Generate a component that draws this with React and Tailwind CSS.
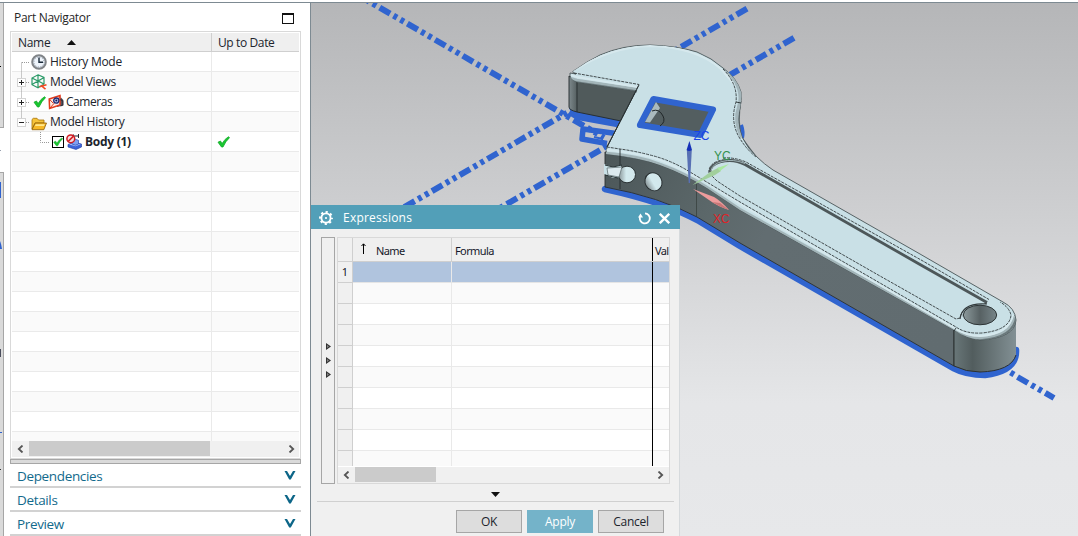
import React from 'react';

const HANDLE_TOP = 'M576 74 Q570 72 575 70 Q586 62 600 55 Q623 45 650 45 Q678 46 697 52 Q712 58 723 68 Q737 78 741 92 Q742 98 740 108 Q736 121 742 137 Q748 149 757 157 Q764 164 773 170 L920 254 L1003 302 Q1015 308 1016 320 Q1015 338 980 340 Q966 338 954 330 L740 210 L707 188 Q685 174 660 165 Q640 158 606 154 L607 147 L636 91 L577 82 Q569 79 570 73 Z';

function Check({ className }) {
  return (
    <svg viewBox="0 0 13 12" className={className}>
      <path d="M1 6.2 L3.5 5 L5 7.6 Q8 2.6 11.6 0.7 L12.5 1.7 Q8.7 5 6 11 L4.5 11 Z" fill="#18c72f" stroke="#12a828" strokeWidth="0.8" />
    </svg>
  );
}

function ClockIcon() {
  return (
    <svg viewBox="0 0 16 16" className="h-4 w-4 shrink-0">
      <circle cx="8" cy="8" r="6.8" fill="#dfe6ee" stroke="#808488" strokeWidth="2" />
      <circle cx="8" cy="8" r="5" fill="#eef4fb" stroke="#8f9aa8" strokeWidth="1" strokeDasharray="1 1.6" />
      <path d="M8 3.5 V8.3 H12" fill="none" stroke="#182838" strokeWidth="1.4" />
    </svg>
  );
}

function ViewsIcon() {
  return (
    <svg viewBox="0 0 16 16" className="h-4 w-4 shrink-0" fill="none">
      <path d="M7 0.8 L13 3.5 V10 L7 13.7 L1 10.7 V4 Z M1 4 L7 7 L13 3.5 M7 1 V13.5 M1 10.5 L7 7 L13 10" stroke="#2b9a68" strokeWidth="1.2" />
      <path d="M8.5 12.8 L15.5 10.8 M10 11.5 L14.5 15.2" stroke="#f04a23" strokeWidth="1.6" />
    </svg>
  );
}

function CameraIcon() {
  return (
    <svg viewBox="0 0 16 16" className="h-4 w-4 shrink-0" fill="none">
      <path d="M9 4.5 L13 3.5 L15.3 6 V11.5 L9 13 Z" fill="#55525c" />
      <path d="M1.2 5 L12 1.5 V11 L1.6 14.5 Z" fill="#fdebe3" stroke="#e33a1c" strokeWidth="1.5" />
      <path d="M1.6 14.5 L12 2.5 M1.2 5 L5 9" stroke="#e33a1c" strokeWidth="1" />
      <circle cx="8.3" cy="6.6" r="2.6" fill="#b7c6ef" stroke="#222a70" strokeWidth="1.3" />
      <circle cx="8.3" cy="6.6" r="1" fill="#101850" />
      <path d="M12.5 5.5 L14.8 7 V11 L12.5 12" stroke="#30303a" strokeWidth="1.1" />
    </svg>
  );
}

function FolderIcon() {
  return (
    <svg viewBox="0 0 16 14" className="mt-[3px] h-[14px] w-4 shrink-0">
      <path d="M1 12 V2.5 L2.3 1.3 H6 L7.5 3 H13 V6 H4 Z" fill="#f6c33a" stroke="#a87408" strokeWidth="0.8" />
      <path d="M1 12.7 L4.2 6 H15.5 L12.8 12.7 Z" fill="#f7b928" stroke="#8a5c05" strokeWidth="0.8" />
      <path d="M4.8 7.2 H13.8 L13 9 H4 Z" fill="#ffe98f" />
    </svg>
  );
}

function BodyIcon() {
  return (
    <svg viewBox="0 0 16 16" className="h-4 w-4 shrink-0" fill="none">
      <path d="M2 10.5 L8 8 L15.5 10 V13 L10 15.5 L2 13 Z" fill="#3d63d8" stroke="#1c3ba3" strokeWidth="0.6" />
      <path d="M3 10.5 L8.5 8.5 L14.5 10.2 L9.6 12.2 Z" fill="#a9bff7" />
      <path d="M6 6.3 L9 5.2 L12.5 6.3 V10 L9.5 11.2 L6 10 Z" fill="#80a0f0" stroke="#2849b8" strokeWidth="0.7" />
      <path d="M7 2 H12.5 M7.5 0.5 V3.5 M12.5 0 V4" stroke="#1f2430" strokeWidth="1" />
      <circle cx="4.8" cy="4.8" r="3.9" fill="#f6dcdc" stroke="#d01b22" strokeWidth="1.5" />
      <path d="M2.1 7.5 L7.5 2.1" stroke="#d01b22" strokeWidth="1.5" />
    </svg>
  );
}

function Toggle({ open }) {
  return (
    <svg viewBox="0 0 9 9" className="h-[9px] w-[9px] shrink-0">
      <rect x="0.5" y="0.5" width="8" height="8" fill="#fff" stroke="#d4d4d4" />
      <path d={open ? 'M2 4.5 H7' : 'M2 4.5 H7 M4.5 2 V7'} stroke="#222" strokeWidth="1" />
    </svg>
  );
}

function Tree() {
  return (
    <div className="flex flex-col text-[12px] leading-5 tracking-[-0.28px] text-[#20242c]">
      <div className="flex h-5 items-center pl-[19px]">
        <ClockIcon /><span className="pl-[3px]">History Mode</span>
      </div>
      <div className="flex h-5 items-center pl-[5px]">
        <Toggle /><span className="w-[5px]" /><ViewsIcon /><span className="pl-[3px] tracking-[-0.4px]">Model Views</span>
      </div>
      <div className="flex h-5 items-center pl-[5px]">
        <Toggle /><span className="w-[7px]" /><Check className="h-3 w-[13px]" /><span className="w-[2px]" /><CameraIcon /><span className="pl-[2px] tracking-[-0.45px]">Cameras</span>
      </div>
      <div className="flex h-5 items-center pl-[5px]">
        <Toggle open /><span className="w-[5px]" /><FolderIcon /><span className="pl-[3px]">Model History</span>
      </div>
      <div className="flex h-5 items-center pl-[40px]">
        <span className="flex h-3 w-3 items-center justify-center border border-black bg-white"><Check className="h-[10px] w-[10px]" /></span>
        <span className="w-[2px]" /><BodyIcon /><span className="pl-[3px] font-bold">Body (1)</span>
      </div>
    </div>
  );
}

function Chevron({ dir }) {
  return (
    <svg viewBox="0 0 7 8" className="h-2 w-[7px] shrink-0" fill="none">
      <path d={dir === 'left' ? 'M5.5 0.5 L1.8 4 L5.5 7.5' : 'M1.5 0.5 L5.2 4 L1.5 7.5'} stroke="#555" strokeWidth="1.8" />
    </svg>
  );
}

function Section({ title }) {
  return (
    <div className="flex h-6 shrink-0 items-center justify-between border-b-2 border-[#d2d2d2] pt-[2px] pr-[5px] pl-[7px]">
      <span className="text-[13.5px] leading-5 tracking-[-0.35px] text-[#126a8c]">{title}</span>
      <svg viewBox="0 0 12 9" className="mb-[2px] h-[9px] w-3"><path d="M0.5 0 H3 L6 5 L9 0 H11.5 L6.8 8.5 H5.2 Z" fill="#0d6688" /></svg>
    </div>
  );
}

function Navigator() {
  return (
    <div className="flex w-[307px] shrink-0 flex-col border-r border-[#7d8a92] bg-white pl-[6px]">
      <div className="flex h-7 shrink-0 items-center justify-between pr-4 pl-1">
        <span className="pt-[2px] text-[12px] tracking-[-0.3px] text-[#262626]">Part Navigator</span>
        <span className="mt-[2px] h-[11px] w-3 border border-t-2 border-[#111]" />
      </div>
      <div className="flex h-[428px] w-[291px] shrink-0 flex-col border border-[#d9d9d9] p-px">
        <div className="flex h-[19px] shrink-0 border-b border-[#cfcfcf] bg-[#efefef] text-[12px] leading-[19px] tracking-[-0.3px] text-[#20242c]">
          <div className="flex w-[200px] items-center border-r border-[#cfcfcf] pl-[6px]">
            Name
            <svg viewBox="0 0 9 5" className="ml-[17px] h-[5px] w-[9px]"><path d="M4.5 0 L9 5 H0 Z" fill="#111" /></svg>
          </div>
          <span className="pl-[6px] tracking-[-0.38px]">Up to Date</span>
        </div>
        <div className="grid min-h-0 flex-1 grid-cols-1 grid-rows-1 overflow-hidden">
          <div className="col-start-1 row-start-1 min-h-0">
            {Array.from({ length: 20 }, (_, i) => (
              <div key={i} className="flex h-5 border-b border-[#eaeaea] odd:bg-white even:bg-[#fafafa]">
                <span className="w-[200px] shrink-0 border-r border-[#eaeaea]" />
                {i === 4 && <Check className="mt-1 ml-[5px] h-3 w-[13px]" />}
              </div>
            ))}
          </div>
          <svg viewBox="0 0 199 388" className="col-start-1 row-start-1 h-[388px] w-[199px]" fill="none">
            <path d="M9.5 10.5 V70 M10 10.5 H18 M14 30.5 H18 M14 50.5 H18 M14 70.5 H18 M28.5 80 V90.5 H38" stroke="#999" strokeDasharray="1 1" />
          </svg>
          <div className="col-start-1 row-start-1"><Tree /></div>
        </div>
        <div className="flex h-4 shrink-0 items-center justify-between bg-[#f0f0f0] pr-1 pb-px pl-[5px]">
          <Chevron dir="left" />
          <span className="mr-auto ml-[5px] h-[15px] w-[181px] bg-[#cbcbcb]" />
          <Chevron dir="right" />
        </div>
      </div>
      <div className="mb-px h-[5px] w-[291px] shrink-0 border border-[#a6a6a6] bg-[#dadada]" />
      <div className="-mt-px flex w-[291px] flex-col">
        <Section title="Dependencies" />
        <Section title="Details" />
        <Section title="Preview" />
      </div>
    </div>
  );
}

function Wrench() {
  return (
    <svg viewBox="311 3 767 533" className="h-full w-full" fill="none">
      <defs>
        <linearGradient id="wall" x1="605" y1="160" x2="954" y2="340" gradientUnits="userSpaceOnUse">
          <stop offset="0" stopColor="#4c5759" /><stop offset="0.3" stopColor="#5c686a" /><stop offset="0.45" stopColor="#626d71" /><stop offset="1" stopColor="#616c70" />
        </linearGradient>
        <linearGradient id="end" x1="954" y1="0" x2="1016" y2="0" gradientUnits="userSpaceOnUse">
          <stop offset="0" stopColor="#697779" /><stop offset="0.3" stopColor="#525d5e" /><stop offset="1" stopColor="#829094" />
        </linearGradient>
        <linearGradient id="jaw" x1="569" y1="0" x2="578" y2="0" gradientUnits="userSpaceOnUse">
          <stop offset="0" stopColor="#7d898c" /><stop offset="1" stopColor="#505a5b" />
        </linearGradient>
        <linearGradient id="bore" x1="963" y1="0" x2="997" y2="0" gradientUnits="userSpaceOnUse">
          <stop offset="0" stopColor="#8d9b9d" /><stop offset="0.5" stopColor="#576163" /><stop offset="1" stopColor="#78868a" />
        </linearGradient>
        <linearGradient id="drill" x1="0" y1="0" x2="1" y2="0">
          <stop offset="0" stopColor="#879396" /><stop offset="0.45" stopColor="#d3eaee" /><stop offset="1" stopColor="#d3e7eb" />
        </linearGradient>
        <clipPath id="topClip"><path d={HANDLE_TOP} /></clipPath>
      </defs>

      <g stroke="#3064cf" strokeWidth="6" strokeDasharray="12 4 4 4 4 4">
        <path d="M352 -8.4 L604 137.6" />
        <path d="M747 8.7 L395 212.5" />
        <path d="M794 37.8 L490 213.8" />
        <path d="M1017.5 377 L1054 398" />
      </g>
      <path d="M1010.5 372.5 L1014 374.5" stroke="#3064cf" strokeWidth="6" />

      <path d="M570 111 L578 116 L622 124" stroke="#3064cf" strokeWidth="8" strokeLinejoin="round" />
      <path d="M616 133.5 L583 129 L582 139 L607 143.5" stroke="#3064cf" strokeWidth="5.5" strokeLinejoin="round" />
      <path d="M594 137 L603 139" stroke="#3064cf" strokeWidth="2" />
      <path d="M741 125 Q743.5 132 742 138" stroke="#3064cf" strokeWidth="4" />
      <path d="M605 189 Q665 202 699 221 L740 246 L954 368.5 Q966 375 985 375 Q1017 371 1016 350" stroke="#3064cf" strokeWidth="6.5" strokeLinecap="round" strokeLinejoin="round" />

      <path d="M569 76 L577 81 L637 90 L621 121 L577 112 Q569 110 569 107 Z" fill="url(#jaw)" stroke="#22292b" strokeWidth="0.9" />
      <path d="M577 82 V112" stroke="#22292b" strokeWidth="0.9" />
      <path d="M605 152 Q640 156 660 163 Q685 173 707 187 L740 208 L954 328 V366 L740 243 L697 217 Q660 197 605 187 Z" fill="url(#wall)" stroke="#2b3030" strokeWidth="0.9" />
      <path d="M954 328 Q966 339 981 339 Q1012 337 1016 318 V355 Q1011 371 980 372 Q966 372 954 366 Z" fill="url(#end)" />
      <path d="M954 328 V366 Q966 372 980 372 Q1011 371 1016 355" stroke="#2b3030" strokeWidth="1" />
      <path d="M735 100 Q729 117 739 137 Q748 151 757 157 L742 137 Q738 120 741.5 101 Z" fill="#5c686b" />

      <path d={HANDLE_TOP} fill="#c9e0e6" stroke="#4a5557" strokeWidth="0.9" />
      <g clipPath="url(#topClip)">
        <path d="M570 79 L577 82 L637 91 M606 155 Q640 158 660 166 Q685 175 707 189 L740 211 L954 331 Q966 340 980 340 Q1014 338 1016 315" stroke="#6b797c" strokeWidth="3" />
        <path d="M570 78 L577 80 L637 89 M606 153 Q640 156 660 164 Q685 173 707 187 L740 209 L954 329 Q966 338 980 338 Q1012 336 1014 316" stroke="#a3b5b9" strokeWidth="2.5" />
        <path d="M571 75 L577 77 L638 87 M606 150 Q640 153 660 160 Q685 170 707 183 L740 204 L954 328 Q966 336 980 336 Q1009 334 1013 315" stroke="#d6e8ed" strokeWidth="2" />
        <path d="M728 71 Q745 90 739 107 Q734 121 742 137" stroke="#a3b5ba" strokeWidth="4" />
        <path d="M573 71 Q610 47 650 46 Q696 47 721 69 L734 84" stroke="#d6e8ed" strokeWidth="2" />
      </g>
      <g stroke="#343b3d" strokeWidth="0.9" strokeDasharray="3 1">
        <path d="M574 73 L639 84.5 L607 147 L620 149 Q635 151 650 155 Q671 160 690 172 L740 202 L956 327 Q966 334 982 333 Q1010 330 1011 315 Q1009 307 1000 302" />
        <path d="M723 69 Q738 84 736 102 Q730 121 739 137 Q746 149 756 157" />
        <path d="M723 158 Q734 157 746 162 L922 260.5 L989 299.5" />
      </g>
      <path d="M639 85 L607 147 M620 149 V189 M956 328 L954 331 M736 102 L741 103" stroke="#242b2d" strokeWidth="0.9" />
      <path d="M696.5 184 V217" stroke="#39413f" strokeWidth="0.8" />

      <path d="M709 173 Q708 163 722 160 Q735 158 746 165 L920 264 L987 303 L982 305 Q962 306 960 318 L956 319 L880 276 L740 196 L717 181 Z" fill="#c9e0e6" stroke="#343b3d" strokeWidth="0.9" strokeDasharray="3 1" />
      <path d="M710 172 Q710 165 720 162 Q733 158 745 164.5 L920 264.5 L987 302.5" stroke="#4d5759" strokeWidth="2.8" />
      <path d="M711 171 Q712 164 722 161.5 Q733 158.5 745 163.5" stroke="#9db0b4" strokeWidth="1" />
      <path d="M987 304 Q962 302 960 319" stroke="#333b3d" strokeWidth="1.2" />
      <path d="M985 305 Q964 305 962 317" stroke="#a8bcc1" strokeWidth="1.2" />
      <ellipse cx="980" cy="315" rx="16.7" ry="9.8" fill="url(#bore)" stroke="#242a2b" strokeWidth="0.9" />

      <path d="M653.5 99 L713 109.5 L700.5 135 L640 125 Z" fill="#535e60" stroke="#3064cf" strokeWidth="6.2" strokeLinejoin="round" />
      <path d="M656 102 L660 108 L650 122.5 L645 122 Z" fill="#aababe" />
      <path d="M652 111 Q659 108 663 116 Q666 122 660 126" stroke="#202628" />

      <path d="M604 164 L613 167 L621 165 L621 177 L613 178 L604 174 Z" fill="#c9e0e6" />
      <path d="M605 165 L613 167 L622 165 M605 175 L618 178" stroke="#263032" />
      <ellipse cx="627" cy="174.5" rx="8.5" ry="8.3" fill="url(#drill)" stroke="#242b2d" strokeWidth="0.9" />
      <path d="M607 168 L622 167 L619 177 L608 175 Z" fill="#dceaef" stroke="#657376" strokeWidth="0.8" />
      <ellipse cx="653.5" cy="181.8" rx="8.3" ry="9.3" transform="rotate(-30 653.5 181.8)" fill="url(#drill)" stroke="#242b2d" strokeWidth="0.9" />

      <path d="M688.7 183 L686.8 150 H691.8 L690 183 Z" fill="#5870b4" />
      <path d="M689.4 141 L692 150 Q689 152 686.6 150 Z" fill="#1530b8" />
      <path d="M692.5 185 L711 171.5 L719 167.5 L721 171 L715 175 Z" fill="#a1cf9c" />
      <path d="M717 168 L729 164 L720 171 Z" fill="#a9e8a0" />
      <path d="M693 189 L714 197 Q721 201 729 210 Q717 206 709 200 Z" fill="#ee9c9c" />
      <path d="M712 202 Q720 207 729 210 L720 203 Z" fill="#c97777" />
      <g fontFamily="Liberation Sans, Arial, sans-serif" fontSize="12">
        <text x="693.5" y="140" fill="#1845e8">ZC</text>
        <text x="714" y="160" fill="#34904d">YC</text>
        <text x="713" y="223" fill="#df2428">XC</text>
      </g>
    </svg>
  );
}

function Grid() {
  return (
    <div className="flex h-[247px] w-[333px] flex-col border border-[#d9d9d9] bg-[#f0f0f0]">
      <div className="flex min-h-0 flex-1 overflow-hidden font-['Noto_Sans','Liberation_Sans',sans-serif] text-[11px] text-[#15182a]">
        <div className="w-[15px] shrink-0 border-r border-[#cfcfcf]">
          <div className="h-6 border-b border-[#d0d0d0]" />
          {Array.from({ length: 10 }, (_, i) => (
            <div key={i} className="h-[21px] border-b border-[#cfcfcf] text-center leading-5">{i === 0 ? '1' : ''}</div>
          ))}
        </div>
        <div className="w-[316px] shrink-0 bg-white">
          <div className="flex h-6 border-b border-[#cfcfcf] bg-[#efefef] leading-[25px] tracking-[-0.6px]">
            <div className="flex w-[99px] shrink-0 border-r border-[#cfcfcf] pl-2">
              <svg viewBox="0 0 5 11" className="mt-[5px] mr-[10px] h-[11px] w-[5px]"><path d="M2.5 11 V1 M0.5 3 L2.5 0.8 L4.5 3" fill="none" stroke="#000" /></svg>
              Name
            </div>
            <div className="w-[200px] shrink-0 pl-[3px]">Formula</div>
            <div className="w-px shrink-0 bg-black" />
            <div className="w-4 pl-[2px] tracking-[-0.7px]">Val</div>
          </div>
          {Array.from({ length: 10 }, (_, i) => (
            <div key={i} className={i === 0 ? 'flex h-[21px] border-b border-[#e5e5e5] bg-[#b0c4de]' : 'flex h-[21px] border-b border-[#e9e9e9] odd:bg-[#fafafa] even:bg-white'}>
              <span className="w-[99px] border-r border-[#e9e9e9]" />
              <span className="-mb-px w-[201px] border-r border-black" />
            </div>
          ))}
        </div>
      </div>
      <div className="flex h-[17px] shrink-0 items-center justify-between border-t border-white pr-[5px] pb-px pl-[5px]">
        <Chevron dir="left" />
        <span className="mr-auto ml-[5px] h-[15px] w-[81px] bg-[#cbcbcb]" />
        <Chevron dir="right" />
      </div>
    </div>
  );
}

function Dialog() {
  return (
    <div className="absolute top-[202px] left-0 flex h-[331px] w-[369px] flex-col border-r border-[#d6dadd] bg-[#f0f0f0]">
      <div className="-mr-px flex h-6 shrink-0 items-center bg-[#529fb8] pr-[10px] pl-2">
        <svg viewBox="0 0 14 14" className="mt-px h-[14px] w-[14px]" fill="none">
          <circle cx="7" cy="7" r="6" stroke="#fff" strokeWidth="1.9" strokeDasharray="2.2 2.512" strokeDashoffset="1.1" />
          <circle cx="7" cy="7" r="4.6" stroke="#fff" strokeWidth="1.9" />
          <circle cx="7" cy="7" r="1.1" fill="#fff" />
        </svg>
        <span className="ml-[10px] flex-1 pt-[2px] text-[12px] tracking-[0.22px] text-white">Expressions</span>
        <svg viewBox="0 0 13 13" className="mt-[3px] mr-2 h-[13px] w-[13px]" fill="none">
          <path d="M7 1.4 A5 5 0 1 1 2 5" stroke="#fff" strokeWidth="1.8" />
          <path d="M0 5.5 L2.5 1.6 L5 5.5 Z" fill="#fff" />
        </svg>
        <svg viewBox="0 0 11 11" className="mt-[3px] h-[11px] w-[11px]"><path d="M0.8 0.8 L10.2 10.2 M10.2 0.8 L0.8 10.2" stroke="#fff" strokeWidth="2.3" /></svg>
      </div>
      <div className="flex shrink-0 gap-[2px] pt-2 pl-[10px]">
        <div className="flex h-[247px] w-[14px] flex-col gap-[7px] border border-[#a6a6a6] pt-[105px] pl-1">
          {[0, 1, 2].map((i) => (
            <svg key={i} viewBox="0 0 5 7" className="h-[7px] w-[5px]"><path d="M0 0 L5 3.5 L0 7 Z" fill="#333" /><path d="M1 2 L3 3.5 L1 5 Z" fill="#888" /></svg>
          ))}
        </div>
        <Grid />
      </div>
      <div className="mr-[5px] ml-[6px] flex h-[18px] shrink-0 justify-center border-b border-[#d0d0d0] pt-2">
        <svg viewBox="0 0 9 5" className="mr-px h-[5px] w-[9px]"><path d="M0 0 H9 L4.5 5 Z" fill="#111" /></svg>
      </div>
      <div className="flex justify-end gap-[5px] pt-2 pr-[15px] text-[12px] leading-[21px] tracking-[-0.25px] text-[#20242c]">
        <button className="h-[23px] w-[66px] border border-[#a6a6a6] bg-[#dddddd]">OK</button>
        <button className="h-[23px] w-[66px] bg-[#74b3c9] text-white">Apply</button>
        <button className="h-[23px] w-[66px] border border-[#a6a6a6] bg-[#dddddd]">Cancel</button>
      </div>
    </div>
  );
}

function EdgeStrip() {
  return (
    <div className="flex w-1 shrink-0 flex-col bg-white">
      <div className="flex h-[125px] shrink-0 flex-col border-r border-b border-[#a6a6a6] bg-[#dadada]">
        <span className="mt-[63px] h-px w-px bg-black" />
      </div>
      <div className="flex h-11 shrink-0 items-center"><span className="h-px w-px bg-gray-400" /></div>
      <div className="flex flex-1 flex-col border-t border-r border-[#a6a6a6] bg-[#dadada]">
        <span className="mt-[9px] h-4 w-px bg-[#2f62ce]" />
        <svg viewBox="0 0 2 8" className="mt-[43px] h-2 w-[2px]"><path d="M0 0 Q1 2 2 8 H0 Z" fill="#2f62ce" /></svg>
        <span className="mt-[100px] h-2 w-px bg-[#4b4e5c]" />
        <span className="mt-[75px] h-px w-[2px] bg-[#2f62ce]" />
        <span className="mt-9 h-px w-px bg-[#333]" />
      </div>
    </div>
  );
}

export default function App() {
  return (
    <div className="flex h-[536px] w-[1078px] flex-col overflow-hidden bg-white font-['Open_Sans','Noto_Sans',sans-serif]">
      <div className="h-[3px] shrink-0 border-b border-[#7d8a92]" />
      <div className="flex min-h-0 flex-1">
        <EdgeStrip />
        <Navigator />
        <div className="relative min-w-0 flex-1 overflow-hidden bg-linear-to-b from-[#b5b6b8] via-[#e5e6e8] via-75% to-[#e7e8ea]">
          <Wrench />
          <Dialog />
        </div>
      </div>
    </div>
  );
}
